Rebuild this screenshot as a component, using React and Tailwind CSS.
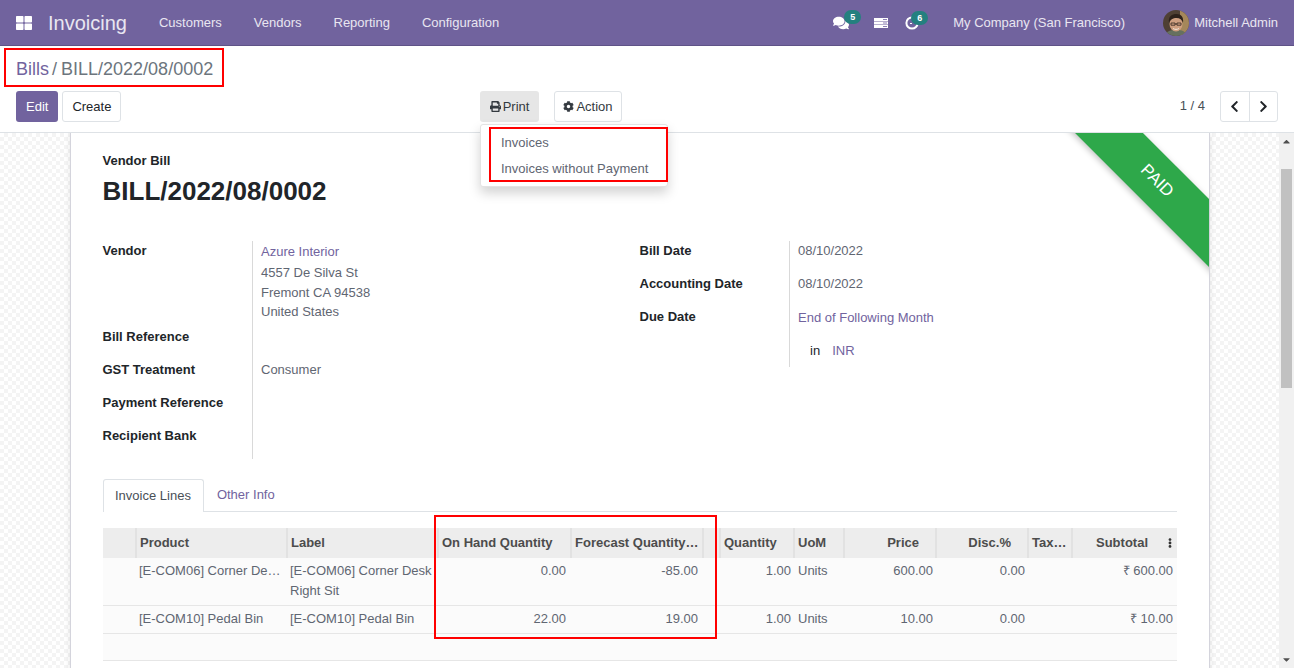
import { FaThLarge, FaComments, FaPrint, FaCog, FaChevronLeft, FaChevronRight, FaEllipsisV, FaCaretUp, FaCaretDown } from 'react-icons/fa';

const MENU = ['Customers', 'Vendors', 'Reporting', 'Configuration'];

const LINES = [
  { product: '[E-COM06] Corner De…', label: ['[E-COM06] Corner Desk', 'Right Sit'], onHand: '0.00', forecast: '-85.00', price: '600.00', subtotal: '₹ 600.00' },
  { product: '[E-COM10] Pedal Bin', label: ['[E-COM10] Pedal Bin'], onHand: '22.00', forecast: '19.00', price: '10.00', subtotal: '₹ 10.00' },
];

function Badge({ n, className }) {
  return (
    <span className={`absolute -top-[5px] w-[17px] h-[14px] rounded-full bg-[#24807f] text-white text-[9px] font-bold leading-[14px] text-center ${className}`}>{n}</span>
  );
}

function Navbar() {
  return (
    <div className="h-[46px] shrink-0 bg-[#71639e] border-b border-[#5f5387] flex items-center text-[#e9e6f1] text-[13px]">
      <FaThLarge className="ml-[16px] w-[16px] h-[16px] text-white" />
      <span className="ml-[16px] text-[20px] mr-[16px]">Invoicing</span>
      {MENU.map(m => <span key={m} className="px-[16px]">{m}</span>)}
      <div className="ml-auto flex items-center">
        <span className="relative mr-[25px]"><FaComments className="w-[16px] h-[16px] text-white" /><Badge n="5" className="left-[11px]" /></span>
        <svg viewBox="0 0 14 10" className="w-[14px] h-[10px] mr-[17px]">
          <path d="M0 0h14v3H0zM0 3.500h14v3H0zM0 7h14v3H0z" fill="#fff" />
          <path d="M9 1h4v1H9zM9 4.500h4v1H9zM9 8h4v1H9z" fill="#8d80b5" />
        </svg>
        <span className="relative mr-[34px]">
          <svg viewBox="0 0 14 14" className="w-[14px] h-[14px]">
            <circle cx="7" cy="7" r="5.600" fill="none" stroke="#fff" strokeWidth="2" />
            <path d="M5 7.500h2" stroke="#fff" strokeWidth="1" />
          </svg>
          <Badge n="6" className="left-[6px]" />
        </span>
        <span>My Company (San Francisco)</span>
        <svg viewBox="0 0 26 26" className="ml-[38px] w-[26px] h-[26px] rounded-full">
          <rect width="26" height="26" fill="#4f4034" />
          <rect x="17" width="9" height="26" fill="#a5875a" />
          <path d="M2 26c1-5 5-6 11-6s10 1 11 6z" fill="#66705f" />
          <ellipse cx="13" cy="14" rx="6.500" ry="7.500" fill="#cf9f80" />
          <path d="M6 13c-1-7 3-9 7.500-9S21 7 20 13c-1-3.500-3-5-6.500-5S7 9.500 6 13z" fill="#2e221b" />
          <path d="M8 13h4v2.200H8zM14 13h4v2.200h-4zM12 14h2" fill="none" stroke="#33261e" strokeWidth=".8" />
          <path d="M10 18.500c2 1.200 4 1.200 6 0" fill="none" stroke="#f3e6da" strokeWidth="1" />
        </svg>
        <span className="ml-[5px] mr-[16px]">Mitchell Admin</span>
      </div>
    </div>
  );
}

function ControlPanel() {
  return (
    <div className="h-[87px] shrink-0 bg-white border-b border-[#dee2e6] px-[16px] pt-[10px] relative">
      <div className="text-[18px] leading-[27px] text-[#6c757d]">
        <span className="text-[#71639e]">Bills</span><span className="ml-[3px] mr-[4px]">/</span><span>BILL/2022/08/0002</span>
      </div>
      <div className="mt-[8px] flex items-center h-[31px] text-[13px]">
        <div className="flex gap-[4px] w-[464px]">
          <button className="h-[31px] px-[10px] rounded-[3px] bg-[#71639e] text-white">Edit</button>
          <button className="h-[31px] px-[9px] rounded-[3px] bg-white border border-[#dee2e6] text-[#212529]">Create</button>
        </div>
        <button className="h-[31px] w-[59px] rounded-[3px] bg-[#e6e6e6] text-[#343a40] flex items-center justify-center gap-[2px]"><FaPrint className="w-[11px] h-[11px]" />Print</button>
        <button className="ml-[15px] h-[31px] w-[68px] rounded-[3px] bg-white border border-[#dee2e6] text-[#343a40] flex items-center justify-center gap-[2px]"><FaCog className="w-[11px] h-[11px]" />Action</button>
        <span className="ml-auto pb-[2px] text-[#495057]">1 / 4</span>
        <div className="ml-[15px] flex h-[31px] w-[58px] border border-[#dee2e6] rounded-[3px] text-[#212529]">
          <span className="flex-1 flex items-center justify-center border-r border-[#dee2e6]"><FaChevronLeft className="w-[13px] h-[13px]" /></span>
          <span className="flex-1 flex items-center justify-center"><FaChevronRight className="w-[13px] h-[13px]" /></span>
        </div>
      </div>
      <div className="absolute left-[480px] top-[78px] z-20 w-[188px] h-[63px] bg-white border border-[#e3e3e3] rounded-[3px] shadow-[0_6px_12px_rgba(0,0,0,0.175)] pt-[6px] text-[13px] text-[#5f6672]">
        <div className="h-[26px] leading-[24px] pl-[20px]">Invoices</div>
        <div className="h-[26px] leading-[24px] pl-[20px]">Invoices without Payment</div>
      </div>
      <div className="absolute left-[4px] top-[2px] w-[220px] h-[39px] border-[2px] border-[#f00] z-30"></div>
      <div className="absolute left-[489px] top-[81px] w-[179px] h-[55px] border-[2px] border-[#f00] z-30"></div>
    </div>
  );
}

function Field({ label, className = '', children }) {
  return (
    <div className={`flex ${className}`}>
      <div className="w-[149.5px] -ml-[0.5px] shrink-0 font-bold text-[#212529]">{label}</div>
      <div className="flex-1 pl-[8px] border-l border-[#d9d9d9] self-stretch">{children}</div>
    </div>
  );
}

function FormGroups() {
  return (
    <div className="mt-[30px] flex text-[13px] leading-[20px] text-[#5f6672]">
      <div className="w-[537px] shrink-0">
        <Field label="Vendor" className="h-[86px]">
          <div className="pt-[1px] text-[#71639e] h-[22px]">Azure Interior</div>
          <div className="h-[20px]">4557 De Silva St</div>
          <div className="h-[19px]">Fremont CA 94538</div>
          <div className="h-[20px]">United States</div>
        </Field>
        <Field label="Bill Reference" className="h-[33px]" />
        <Field label="GST Treatment" className="h-[33px]">Consumer</Field>
        <Field label="Payment Reference" className="h-[33px]" />
        <Field label="Recipient Bank" className="h-[33px]" />
      </div>
      <div className="flex-1">
        <Field label="Bill Date" className="h-[33px]">08/10/2022</Field>
        <Field label="Accounting Date" className="h-[33px]">08/10/2022</Field>
        <Field label="Due Date" className="h-[33px]"><div className="pt-[1px] text-[#71639e]">End of Following Month</div></Field>
        <Field label="" className="h-[27px]">
          <div className="pt-[1px]"><span className="ml-[12px] text-[#212529]">in</span><span className="ml-[12px] text-[#71639e]">INR</span></div>
        </Field>
      </div>
    </div>
  );
}

function Tabs() {
  return (
    <div className="mt-[20px] flex h-[33px] border-b border-[#dee2e6] text-[13px]">
      <div className="h-[33px] pl-[11px] pr-[12px] leading-[32px] bg-white border border-b-0 border-[#dee2e6] rounded-t-[3px] text-[#495057]">Invoice Lines</div>
      <div className="h-[33px] px-[13px] leading-[32px] text-[#71639e]">Other Info</div>
    </div>
  );
}

function Th({ w, right, pr = 'pr-[17px]', children }) {
  return (
    <th className={`${w} h-[30px] pl-[3px] pb-[1px] border-l-2 first:border-l-0 border-[#e2e2e2] font-bold overflow-hidden whitespace-nowrap ${right ? `text-right ${pr}` : 'text-left pr-[4px]'}`}>{children}</th>
  );
}

function LinesTable() {
  return (
    <table className="mt-[16px] w-[1074px] table-fixed border-collapse text-[13px] text-[#5f6672]">
      <thead className="bg-[#ededed] text-[#4c4c4c]">
        <tr>
          <Th w="w-[33px]" />
          <Th w="w-[151px]">Product</Th>
          <Th w="w-[151px]">Label</Th>
          <Th w="w-[133px]">On Hand Quantity</Th>
          <Th w="w-[132px]">Forecast Quantity…</Th>
          <Th w="w-[17px]" />
          <Th w="w-[74px]" right pr="pr-[18px]">Quantity</Th>
          <Th w="w-[50px]">UoM</Th>
          <Th w="w-[92px]" right pr="pr-[16px]">Price</Th>
          <Th w="w-[92px]" right pr="pr-[16px]">Disc.%</Th>
          <Th w="w-[44px]">Tax…</Th>
          <th className="w-[105px] h-[30px] pb-[1px] border-l-2 border-[#e2e2e2] font-bold">
            <div className="flex items-center justify-end">
              Subtotal
              <FaEllipsisV className="ml-[17px] mr-[2px] w-[10px] h-[10px] text-[#333]" />
            </div>
          </th>
        </tr>
      </thead>
      <tbody className="bg-[#fbfbfb] leading-[20px]">
        {LINES.map(l => (
          <tr key={l.product} className="border-b border-[#e6e6e6] align-top">
            <td />
            <td className="pl-[3px] pr-[4px] pt-[3px] pb-[4px] whitespace-nowrap overflow-hidden">{l.product}</td>
            <td className="pl-[3px] pt-[3px] pb-[4px] whitespace-nowrap">{l.label.map(t => <div key={t}>{t}</div>)}</td>
            <td className="pr-[5px] pt-[3px] text-right">{l.onHand}</td>
            <td className="pr-[5px] pt-[3px] text-right">{l.forecast}</td>
            <td />
            <td className="pr-[3px] pt-[3px] text-right">1.00</td>
            <td className="pl-[4px] pt-[3px]">Units</td>
            <td className="pr-[3px] pt-[3px] text-right">{l.price}</td>
            <td className="pr-[3px] pt-[3px] text-right">0.00</td>
            <td />
            <td className="pr-[4px] pt-[3px] text-right">{l.subtotal}</td>
          </tr>
        ))}
        <tr className="h-[27px] border-b border-[#e6e6e6]"><td colSpan="12" /></tr>
      </tbody>
    </table>
  );
}

function Sheet() {
  return (
    <div className="relative ml-[70px] w-[1140px] min-h-[600px] bg-white border-x border-[#d4d4dc] px-[32px] pt-[20px] shadow-[0_0_6px_rgba(0,0,0,0.1)]">
      <div className="absolute top-0 right-0 w-[150px] h-[150px] overflow-hidden">
        <div className="absolute top-[26px] -left-[30px] w-[260px] h-[48px] pr-[6px] leading-[48px] rotate-45 bg-[#2ea84a] text-white text-[17px] text-center shadow-[0_2px_6px_rgba(0,0,0,0.25)]">PAID</div>
      </div>
      <div className="-ml-[0.5px] font-bold text-[13px] leading-[16px] text-[#212529]">Vendor Bill</div>
      <h1 className="-ml-[0.5px] mt-[3px] font-bold text-[26px] leading-[39px] text-[#212529]">BILL/2022/08/0002</h1>
      <FormGroups />
      <Tabs />
      <LinesTable />
    </div>
  );
}

export default function App() {
  return (
    <div className="h-[668px] w-[1294px] flex flex-col overflow-hidden relative font-['Liberation_Sans',Arial,sans-serif]">
      <Navbar />
      <ControlPanel />
      <div className="flex-1 flex min-h-0">
        <div className="flex-1 overflow-hidden bg-[repeating-conic-gradient(#f4f4f4_0_25%,#ffffff_0_50%)] bg-[length:8px_8px]">
          <Sheet />
        </div>
        <div className="w-[15px] shrink-0 bg-[#f1f1f1] flex flex-col items-center text-[#505050]">
          <FaCaretUp className="w-[11px] h-[11px] mt-[3px]" />
          <div className="mt-[22px] w-[11px] h-[219px] bg-[#c1c1c1]" />
          <FaCaretDown className="w-[11px] h-[11px] mt-auto mb-[3px]" />
        </div>
      </div>
      <div className="absolute left-[434px] top-[515px] w-[283px] h-[124px] border-[2px] border-[#f00] z-30"></div>
    </div>
  );
}
